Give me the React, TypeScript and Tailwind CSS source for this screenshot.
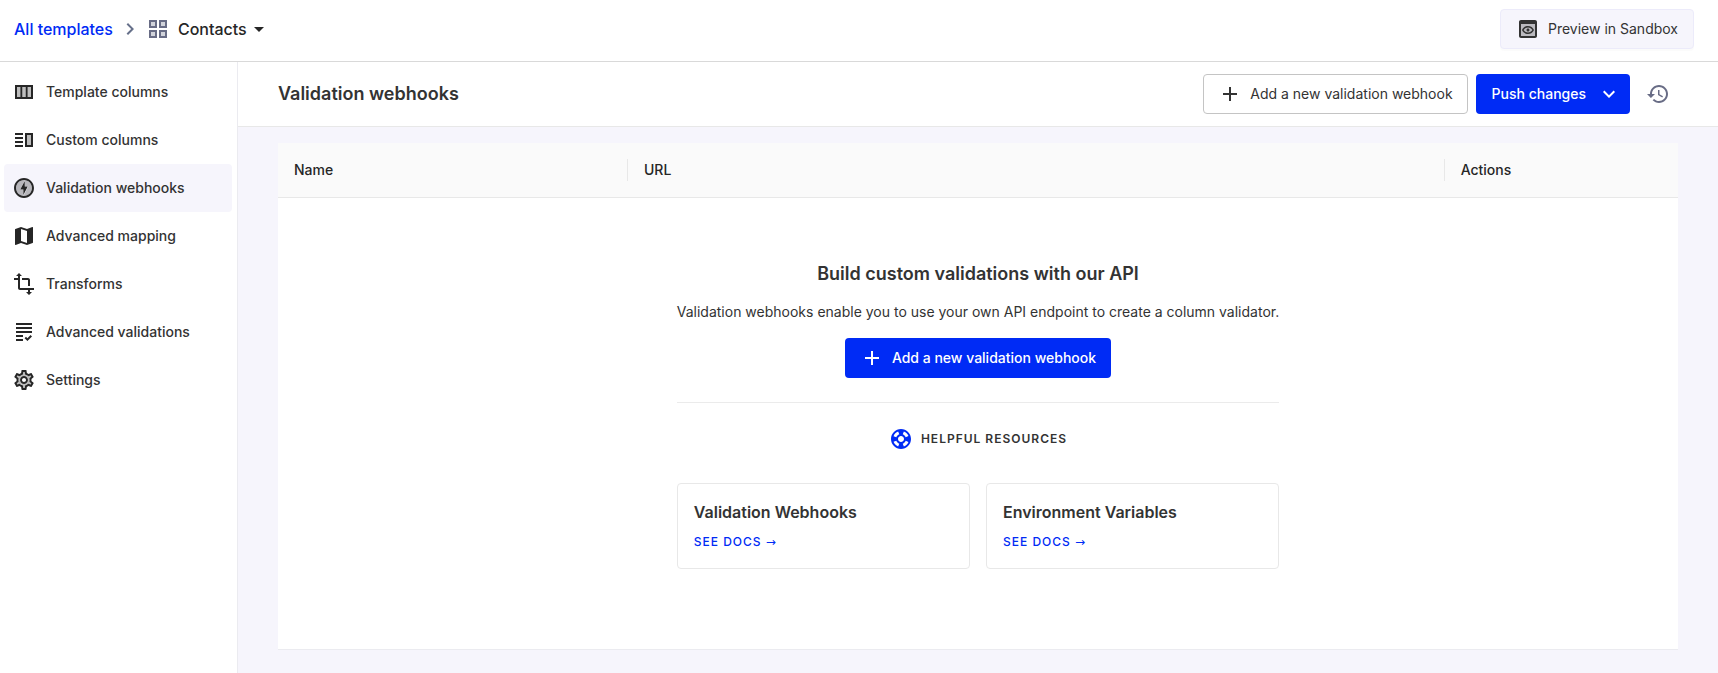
import type { ReactNode } from "react";

function Icon({ children, className = "size-6" }: { children: ReactNode; className?: string }) {
  return (
    <svg viewBox="0 0 24 24" fill="currentColor" aria-hidden="true" className={`shrink-0 ${className}`}>
      {children}
    </svg>
  );
}

const PlusIcon = () => (
  <Icon>
    <path d="M19 13h-6v6h-2v-6H5v-2h6V5h2v6h6v2z" />
  </Icon>
);

const navItems: { label: string; active?: boolean; icon: ReactNode }[] = [
  {
    label: "Template columns",
    icon: (
      <>
        <path opacity=".3" d="M5 7h3.33v10H5zM10.33 7h3.34v10h-3.34zM15.67 7H19v10h-3.33z" />
        <path d="M3 5v14h18V5H3zm5.33 12H5V7h3.33v10zm5.34 0h-3.33V7h3.33v10zM19 17h-3.33V7H19v10z" />
      </>
    ),
  },
  {
    label: "Custom columns",
    icon: (
      <>
        <path opacity=".3" d="M15 7h4v10h-4z" />
        <path d="M3 13h8v2H3zm0 4h8v2H3zm0-8h8v2H3zm0-4h8v2H3zm16 2v10h-4V7h4m2-2h-8v14h8V5z" />
      </>
    ),
  },
  {
    label: "Validation webhooks",
    active: true,
    icon: (
      <>
        <path
          opacity=".3"
          d="M12 4.02C7.6 4.02 4.02 7.6 4.02 12S7.6 19.98 12 19.98s7.98-3.58 7.98-7.98S16.4 4.02 12 4.02zM11.48 20v-6.26H8L13 4v6.26h3.35L11.48 20z"
        />
        <path d="M12 2.02c-5.51 0-9.98 4.47-9.98 9.98s4.47 9.98 9.98 9.98 9.98-4.47 9.98-9.98S17.51 2.02 12 2.02zm0 17.96c-4.4 0-7.98-3.58-7.98-7.98S7.6 4.02 12 4.02 19.98 7.6 19.98 12 16.4 19.98 12 19.98zM12.75 5l-4.5 8.5h3.14V19l4.36-8.5h-3V5z" />
      </>
    ),
  },
  {
    label: "Advanced mapping",
    icon: (
      <path d="M20.5 3l-.16.03L15 5.1 9 3 3.36 4.9c-.21.07-.36.25-.36.48V20.5c0 .28.22.5.5.5l.16-.03L9 18.9l6 2.1 5.64-1.9c.21-.07.36-.25.36-.48V3.5c0-.28-.22-.5-.5-.5zM15 19l-6-2.11V5l6 2.11V19z" />
    ),
  },
  {
    label: "Transforms",
    icon: (
      <path d="M22 18v-2H8V4h2L7 1 4 4h2v2H2v2h4v8c0 1.1.9 2 2 2h8v2h-2l3 3 3-3h-2v-2h4zM10 8h6v6h2V8c0-1.1-.9-2-2-2h-6v2z" />
    ),
  },
  {
    label: "Advanced validations",
    icon: (
      <path d="M4 7h16v2H4V7zm0 6h16v-2H4v2zm0 4h7v-2H4v2zm0 4h7v-2H4v2zm11.41-2.83L14 16.75l-1.41 1.41L15.41 21 20 16.42 18.58 15l-3.17 3.17zM4 3v2h16V3H4z" />
    ),
  },
  {
    label: "Settings",
    icon: (
      <>
        <path
          opacity=".3"
          d="M19.28 8.6l-.7-1.21-1.27.51-1.06.43-.91-.7c-.39-.3-.8-.54-1.23-.71l-1.06-.43-.16-1.13L12.7 4h-1.4l-.19 1.35-.16 1.13-1.06.44c-.41.17-.82.41-1.25.73l-.9.68-1.05-.42-1.27-.52-.7 1.21 1.08.84.89.7-.14 1.13c-.03.3-.05.53-.05.73s.02.43.05.73l.14 1.13-.89.7-1.08.84.7 1.21 1.27-.51 1.06-.43.91.7c.39.3.8.54 1.23.71l1.06.43.16 1.13.19 1.36h1.39l.19-1.35.16-1.13 1.06-.43c.41-.17.82-.41 1.25-.73l.9-.68 1.04.42 1.27.51.7-1.21-1.08-.84-.89-.7.14-1.13c.04-.31.05-.52.05-.73 0-.21-.02-.43-.05-.73l-.14-1.13.89-.7 1.1-.84zM12 16c-2.21 0-4-1.79-4-4s1.79-4 4-4 4 1.79 4 4-1.79 4-4 4z"
        />
        <path d="M19.43 12.98c.04-.32.07-.64.07-.98s-.03-.66-.07-.98l2.11-1.65c.19-.15.24-.42.12-.64l-2-3.46c-.09-.16-.26-.25-.44-.25-.06 0-.12.01-.17.03l-2.49 1c-.52-.4-1.08-.73-1.69-.98l-.38-2.65C14.46 2.18 14.25 2 14 2h-4c-.25 0-.46.18-.49.42l-.38 2.65c-.61.25-1.17.59-1.69.98l-2.49-1c-.06-.02-.12-.03-.18-.03-.17 0-.34.09-.43.25l-2 3.46c-.13.22-.07.49.12.64l2.11 1.65c-.04.32-.07.65-.07.98s.03.66.07.98l-2.11 1.65c-.19.15-.24.42-.12.64l2 3.46c.09.16.26.25.44.25.06 0 .12-.01.17-.03l2.49-1c.52.4 1.08.73 1.69.98l.38 2.65c.03.24.24.42.49.42h4c.25 0 .46-.18.49-.42l.38-2.65c.61-.25 1.17-.59 1.69-.98l2.49 1c.06.02.12.03.18.03.17 0 .34-.09.43-.25l2-3.46c.12-.22.07-.49-.12-.64l-2.11-1.65zm-1.98-1.71c.04.31.05.52.05.73 0 .21-.02.43-.05.73l-.14 1.13.89.7 1.08.84-.7 1.21-1.27-.51-1.04-.42-.9.68c-.43.32-.84.56-1.25.73l-1.06.43-.16 1.13-.2 1.35h-1.4l-.19-1.35-.16-1.13-1.06-.43c-.43-.18-.83-.41-1.23-.71l-.91-.7-1.06.43-1.27.51-.7-1.21 1.08-.84.89-.7-.14-1.13c-.03-.31-.05-.54-.05-.74s.02-.43.05-.73l.14-1.13-.89-.7-1.08-.84.7-1.21 1.27.51 1.04.42.9-.68c.43-.32.84-.56 1.25-.73l1.06-.43.16-1.13.2-1.35h1.39l.19 1.35.16 1.13 1.06.43c.43.18.83.41 1.23.71l.91.7 1.06-.43 1.27-.51.7 1.21-1.07.85-.89.7.14 1.13zM12 8c-2.21 0-4 1.79-4 4s1.79 4 4 4 4-1.79 4-4-1.79-4-4-4zm0 6c-1.1 0-2-.9-2-2s.9-2 2-2 2 .9 2 2-.9 2-2 2z" />
      </>
    ),
  },
];

function TopBar() {
  return (
    <header className="flex items-center justify-between border-b border-[#d9d9d9] bg-white pt-[9px] pr-6 pb-3 pl-3.5">
      <nav aria-label="Breadcrumb" className="flex items-center text-base font-medium">
        <a href="#templates" className="text-[#002bf5]">
          All templates
        </a>
        <Icon className="ml-[5px] size-6 text-[#66708a]">
          <path d="M10 6L8.59 7.41 13.17 12l-4.58 4.59L10 18l6-6z" />
        </Icon>
        <Icon className="mr-2 ml-1 size-6 text-[#686c85]">
          <path opacity=".3" d="M5 5h4v4H5zm10 10h4v4h-4zM5 15h4v4H5zM15 5h4v4h-4z" />
          <path d="M3 21h8v-8H3v8zm2-6h4v4H5v-4zM3 11h8V3H3v8zm2-6h4v4H5V5zm8 16h8v-8h-8v8zm2-6h4v4h-4v-4zM13 3v8h8V3h-8zm6 6h-4V5h4v4z" />
        </Icon>
        <button type="button" className="flex items-center text-[#262626]">
          Contacts
          <Icon className="size-6">
            <path d="M7 10l5 5 5-5z" />
          </Icon>
        </button>
      </nav>
      <button
        type="button"
        className="flex h-10 items-center gap-2 rounded border border-[#ecebfa] bg-[#f6f5fc] px-[15px] text-sm text-[#333] shadow-[0_2px_0_rgba(0,0,0,0.016)]"
      >
        <Icon>
          <path opacity=".3" d="M5 7h14v12H5z" />
          <path d="M19 3H5c-1.11 0-2 .9-2 2v14c0 1.1.89 2 2 2h14c1.1 0 2-.9 2-2V5c0-1.1-.89-2-2-2zm0 16H5V7h14v12zm-7-8.5c1.84 0 3.48.96 4.34 2.5-.86 1.54-2.5 2.5-4.34 2.5S8.52 14.54 7.66 13c.86-1.54 2.5-2.5 4.34-2.5M12 9c-2.73 0-5.06 1.66-6 4 .94 2.34 3.27 4 6 4s5.06-1.66 6-4c-.94-2.34-3.27-4-6-4zm0 5.5c-.83 0-1.5-.67-1.5-1.5s.67-1.5 1.5-1.5 1.5.67 1.5 1.5-.67 1.5-1.5 1.5z" />
        </Icon>
        Preview in Sandbox
      </button>
    </header>
  );
}

function Sidebar() {
  return (
    <aside className="w-[238px] shrink-0 border-r border-[#ebebf0] bg-white py-1.5 pr-[5px] pl-1">
      <nav aria-label="Template sections">
        <ul>
          {navItems.map((item) => (
            <li key={item.label}>
              <a
                href="#section"
                aria-current={item.active ? "page" : undefined}
                className={`flex h-12 items-center gap-2.5 rounded pl-2 text-sm font-medium text-[#333] ${item.active ? "bg-[#f6f5fc]" : ""}`}
              >
                <Icon className="size-6 text-[#262626]">{item.icon}</Icon>
                {item.label}
              </a>
            </li>
          ))}
        </ul>
      </nav>
    </aside>
  );
}

function ResourceCard({ title }: { title: string }) {
  return (
    <section className="rounded border border-[#e8e8e8] p-4 text-left">
      <h3 className="text-base leading-6 font-semibold text-[#333]">{title}</h3>
      <a href="#docs" className="mt-2 block text-xs leading-5 font-medium tracking-[1px] text-[#002bf5]">
        SEE DOCS <span className="font-['DejaVu_Sans',sans-serif]">→</span>
      </a>
    </section>
  );
}

function EmptyState() {
  return (
    <div className="mx-auto flex w-fit flex-col text-center">
      <h2 className="text-lg leading-7 font-semibold text-[#333]">Build custom validations with our API</h2>
      <p className="mt-[13px] text-sm leading-[22px] text-[#333]">
        Validation webhooks enable you to use your own API endpoint to create a column validator.
      </p>
      <button
        type="button"
        className="mt-[15px] flex h-10 items-center gap-2 self-center rounded bg-[#002bf5] px-[15px] text-sm font-medium text-white"
      >
        <PlusIcon />
        Add a new validation webhook
      </button>
      <hr className="mt-6 border-[#ebebeb]" />
      <div className="mt-6 flex items-center justify-center gap-2 text-xs font-semibold tracking-[1px] text-[#333]">
        <Icon className="size-6 text-[#002bf5]">
          <path d="M12 2C6.48 2 2 6.48 2 12s4.48 10 10 10 10-4.48 10-10S17.52 2 12 2zm7.46 7.12l-2.78 1.15c-.51-1.36-1.58-2.44-2.95-2.94l1.15-2.78c2.1.8 3.77 2.47 4.58 4.57zM12 15c-1.66 0-3-1.34-3-3s1.34-3 3-3 3 1.34 3 3-1.34 3-3 3zM9.13 4.54l1.17 2.78c-1.38.5-2.47 1.59-2.98 2.97L4.54 9.13c.81-2.11 2.48-3.78 4.59-4.59zM4.54 14.87l2.78-1.15c.51 1.38 1.59 2.46 2.97 2.96l-1.17 2.78c-2.1-.81-3.77-2.48-4.58-4.59zm10.34 4.59l-1.15-2.78c1.37-.51 2.45-1.59 2.95-2.97l2.78 1.17c-.81 2.1-2.48 3.77-4.58 4.58z" />
        </Icon>
        HELPFUL RESOURCES
      </div>
      <div className="mt-8 grid grid-cols-2 gap-4">
        <ResourceCard title="Validation Webhooks" />
        <ResourceCard title="Environment Variables" />
      </div>
    </div>
  );
}

function WebhookTable() {
  return (
    <table className="w-full table-fixed border-collapse bg-white text-sm">
      <thead>
        <tr className="h-[54px] border-b border-[#e8e8e8] bg-[#fafafa] text-left text-[#262626]">
          <th scope="col" className="w-3/12 p-0 font-medium">
            <div className="border-r border-[#e8e8e8] px-4 leading-[22px]">Name</div>
          </th>
          <th scope="col" className="w-7/12 p-0 font-medium">
            <div className="border-r border-[#e8e8e8] px-4 leading-[22px]">URL</div>
          </th>
          <th scope="col" className="w-2/12 p-0 font-medium">
            <div className="px-4 leading-[22px]">Actions</div>
          </th>
        </tr>
      </thead>
      <tbody>
        <tr className="border-b border-[#ebebf0]">
          <td colSpan={3} className="px-4 pt-[62px] pb-20">
            <EmptyState />
          </td>
        </tr>
      </tbody>
    </table>
  );
}

export default function App() {
  return (
    <div className="flex min-h-screen flex-col bg-[#f6f5fc] font-['Inter',sans-serif]">
      <TopBar />
      <div className="flex grow">
        <Sidebar />
        <main className="min-w-0 grow">
          <div className="flex items-center justify-between border-b border-[#e8e8e8] bg-white py-3 pr-12 pl-10">
            <h1 className="text-lg font-semibold text-[#333]">Validation webhooks</h1>
            <div className="flex items-center gap-2">
              <button
                type="button"
                className="flex h-10 items-center gap-2 rounded border border-[#c4c4c4] bg-white px-3.5 text-sm text-[#333]"
              >
                <PlusIcon />
                Add a new validation webhook
              </button>
              <button
                type="button"
                className="flex h-10 items-center gap-[11px] rounded bg-[#002bf5] pr-[9px] pl-4 text-sm font-medium text-white"
              >
                Push changes
                <Icon>
                  <path d="M16.59 8.59L12 13.17 7.41 8.59 6 10l6 6 6-6z" />
                </Icon>
              </button>
              <button type="button" aria-label="Version history" className="ml-2 text-[#686c85]">
                <Icon>
                  <path d="M13 3c-4.97 0-9 4.03-9 9H1l3.89 3.89.07.14L9 12H6c0-3.87 3.13-7 7-7s7 3.13 7 7-3.13 7-7 7c-1.93 0-3.68-.79-4.94-2.06l-1.42 1.42C8.27 19.99 10.51 21 13 21c4.97 0 9-4.03 9-9s-4.03-9-9-9zm-1 5v5l4.28 2.54.72-1.21-3.5-2.08V8H12z" />
                </Icon>
              </button>
            </div>
          </div>
          <div className="px-10 pt-4 pb-6">
            <WebhookTable />
          </div>
        </main>
      </div>
    </div>
  );
}
